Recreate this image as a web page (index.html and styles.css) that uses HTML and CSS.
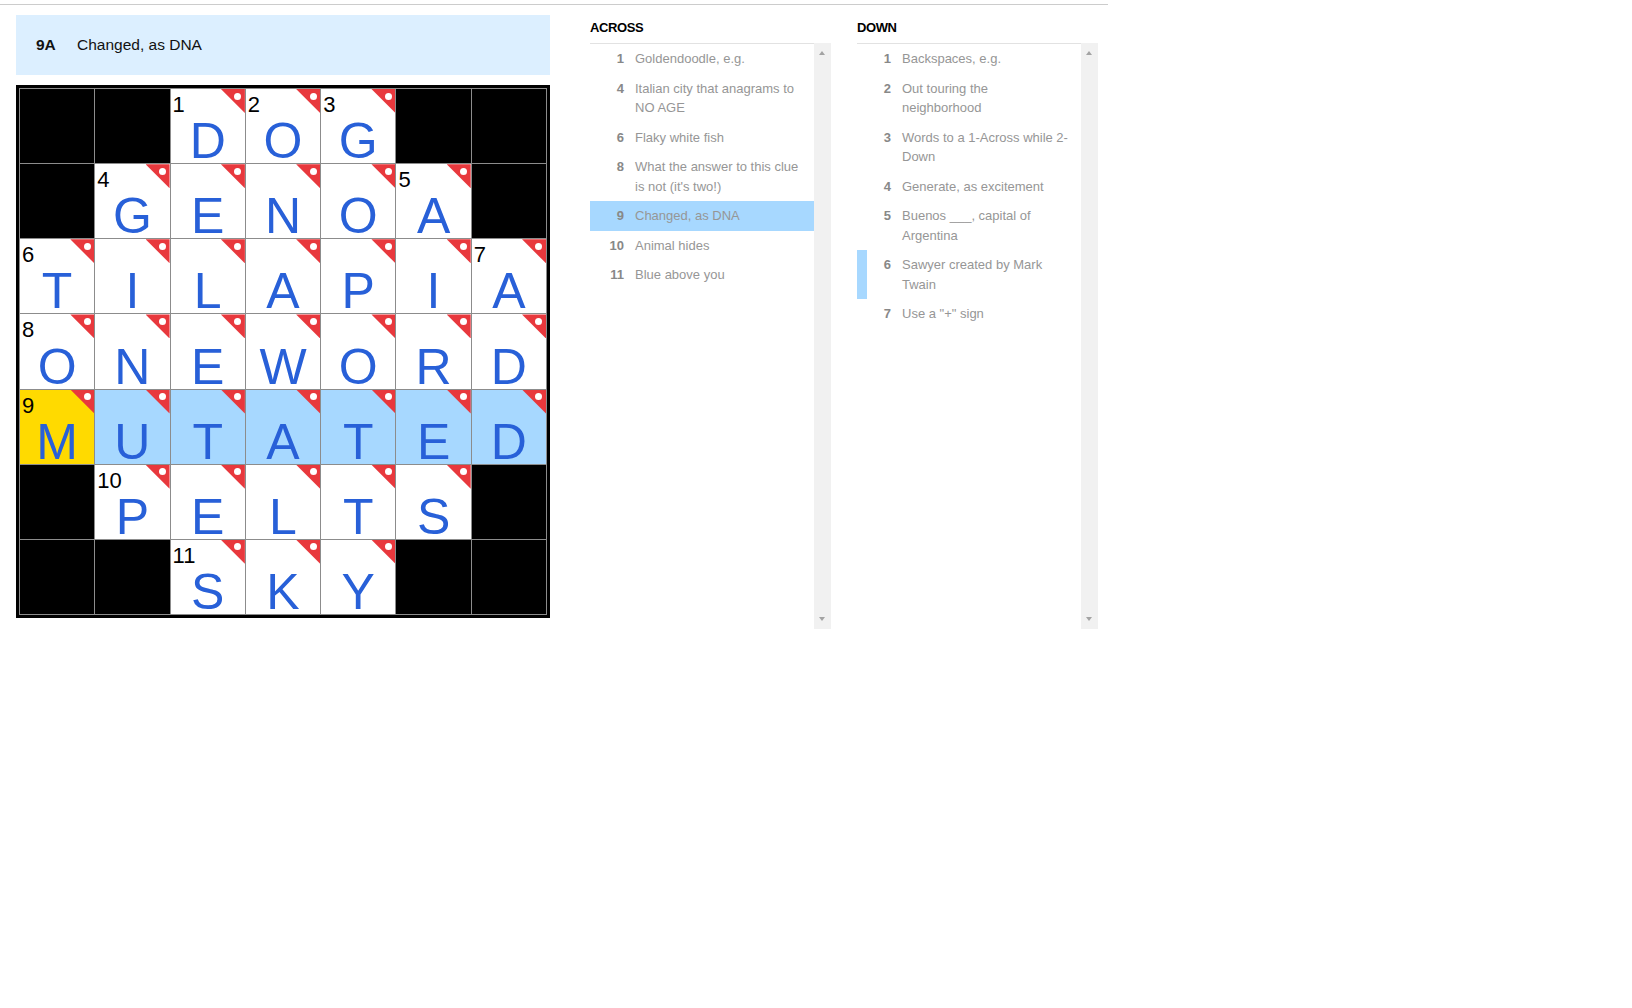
FILE: index.html
```html
<!DOCTYPE html>
<html lang="en">
<head>
<meta charset="utf-8">
<title>Mini Crossword</title>
<link rel="stylesheet" href="styles.css">
</head>
<body>
<div class="app">
  <section class="puzzle">
    <div class="clue-bar"><span class="clue-bar-label">9A</span><span class="clue-bar-text">Changed, as DNA</span></div>
    <div class="board">
      <div class="cell block"></div>
      <div class="cell block"></div>
      <div class="cell open"><span class="num">1</span><span class="letter">D</span></div>
      <div class="cell open"><span class="num">2</span><span class="letter">O</span></div>
      <div class="cell open"><span class="num">3</span><span class="letter">G</span></div>
      <div class="cell block"></div>
      <div class="cell block"></div>

      <div class="cell block"></div>
      <div class="cell open"><span class="num">4</span><span class="letter">G</span></div>
      <div class="cell open"><span class="letter">E</span></div>
      <div class="cell open"><span class="letter">N</span></div>
      <div class="cell open"><span class="letter">O</span></div>
      <div class="cell open"><span class="num">5</span><span class="letter">A</span></div>
      <div class="cell block"></div>

      <div class="cell open"><span class="num">6</span><span class="letter">T</span></div>
      <div class="cell open"><span class="letter">I</span></div>
      <div class="cell open"><span class="letter">L</span></div>
      <div class="cell open"><span class="letter">A</span></div>
      <div class="cell open"><span class="letter">P</span></div>
      <div class="cell open"><span class="letter">I</span></div>
      <div class="cell open"><span class="num">7</span><span class="letter">A</span></div>

      <div class="cell open"><span class="num">8</span><span class="letter">O</span></div>
      <div class="cell open"><span class="letter">N</span></div>
      <div class="cell open"><span class="letter">E</span></div>
      <div class="cell open"><span class="letter">W</span></div>
      <div class="cell open"><span class="letter">O</span></div>
      <div class="cell open"><span class="letter">R</span></div>
      <div class="cell open"><span class="letter">D</span></div>

      <div class="cell open selected"><span class="num">9</span><span class="letter">M</span></div>
      <div class="cell open highlighted"><span class="letter">U</span></div>
      <div class="cell open highlighted"><span class="letter">T</span></div>
      <div class="cell open highlighted"><span class="letter">A</span></div>
      <div class="cell open highlighted"><span class="letter">T</span></div>
      <div class="cell open highlighted"><span class="letter">E</span></div>
      <div class="cell open highlighted"><span class="letter">D</span></div>

      <div class="cell block"></div>
      <div class="cell open"><span class="num">10</span><span class="letter">P</span></div>
      <div class="cell open"><span class="letter">E</span></div>
      <div class="cell open"><span class="letter">L</span></div>
      <div class="cell open"><span class="letter">T</span></div>
      <div class="cell open"><span class="letter">S</span></div>
      <div class="cell block"></div>

      <div class="cell block"></div>
      <div class="cell block"></div>
      <div class="cell open"><span class="num">11</span><span class="letter">S</span></div>
      <div class="cell open"><span class="letter">K</span></div>
      <div class="cell open"><span class="letter">Y</span></div>
      <div class="cell block"></div>
      <div class="cell block"></div>
    </div>
  </section>

  <section class="clue-list across">
    <h3 class="clue-list-title">ACROSS</h3>
    <div class="clue-list-body">
      <ol class="clues">
        <li class="clue"><span class="clue-num">1</span><span class="clue-text">Goldendoodle, e.g.</span></li>
        <li class="clue"><span class="clue-num">4</span><span class="clue-text">Italian city that anagrams to NO AGE</span></li>
        <li class="clue"><span class="clue-num">6</span><span class="clue-text">Flaky white fish</span></li>
        <li class="clue"><span class="clue-num">8</span><span class="clue-text">What the answer to this clue is not (it's two!)</span></li>
        <li class="clue active"><span class="clue-num">9</span><span class="clue-text">Changed, as DNA</span></li>
        <li class="clue"><span class="clue-num">10</span><span class="clue-text">Animal hides</span></li>
        <li class="clue"><span class="clue-num">11</span><span class="clue-text">Blue above you</span></li>
      </ol>
      <div class="scrollbar"><span class="arrow up"></span><span class="arrow down"></span></div>
    </div>
  </section>

  <section class="clue-list down">
    <h3 class="clue-list-title">DOWN</h3>
    <div class="clue-list-body">
      <ol class="clues">
        <li class="clue"><span class="clue-num">1</span><span class="clue-text">Backspaces, e.g.</span></li>
        <li class="clue"><span class="clue-num">2</span><span class="clue-text">Out touring the neighborhood</span></li>
        <li class="clue"><span class="clue-num">3</span><span class="clue-text">Words to a 1-Across while 2-Down</span></li>
        <li class="clue"><span class="clue-num">4</span><span class="clue-text">Generate, as excitement</span></li>
        <li class="clue"><span class="clue-num">5</span><span class="clue-text">Buenos ___, capital of Argentina</span></li>
        <li class="clue crossing"><span class="clue-num">6</span><span class="clue-text">Sawyer created by Mark Twain</span></li>
        <li class="clue"><span class="clue-num">7</span><span class="clue-text">Use a "+" sign</span></li>
      </ol>
      <div class="scrollbar"><span class="arrow up"></span><span class="arrow down"></span></div>
    </div>
  </section>
</div>
</body>
</html>
```

FILE: styles.css
```css
* {
  box-sizing: border-box;
}

body {
  margin: 0;
  background: #fff;
  font-family: "Liberation Sans", Arial, sans-serif;
}

.app {
  width: 1108px;
  margin-top: 4px;
  border-top: 1px solid #cccccc;
  padding: 10px 0 0 16px;
  display: flex;
  align-items: flex-start;
}

/* ---------- puzzle ---------- */

.puzzle {
  width: 534px;
  flex: none;
  display: flex;
  flex-direction: column;
  gap: 10px;
}

.clue-bar {
  height: 60px;
  background: #dcefff;
  display: flex;
  align-items: center;
  padding-left: 20px;
  font-size: 15.5px;
  color: #121212;
}

.clue-bar-label {
  width: 41px;
  font-weight: bold;
}

.board {
  width: 534px;
  height: 533px;
  border: 3px solid #000;
  background: #8c8c8c;
  padding: 1px;
  display: grid;
  grid-template-columns: repeat(7, 1fr);
  grid-template-rows: repeat(7, 1fr);
  gap: 1px;
}

.cell {
  position: relative;
  background: #fff;
  display: flex;
  justify-content: center;
  align-items: flex-end;
}

.cell.block {
  background: #000;
}

.cell.highlighted {
  background: #a7d8ff;
}

.cell.selected {
  background: #ffda00;
}

.cell.open::before {
  content: "";
  position: absolute;
  top: 0;
  right: 0;
  width: 24px;
  height: 24px;
  background: #e8383d;
  clip-path: polygon(0 0, 100% 0, 100% 100%);
}

.cell.open::after {
  content: "";
  position: absolute;
  top: 3.5px;
  right: 3.5px;
  width: 7px;
  height: 7px;
  border-radius: 50%;
  background: #fff;
}

.num {
  position: absolute;
  top: 5px;
  left: 2px;
  font-size: 22px;
  line-height: 1;
  color: #000;
}

.letter {
  font-size: 50px;
  line-height: 1;
  color: #2860d8;
  margin-bottom: -3px;
}

/* ---------- clue lists ---------- */

.clue-list {
  width: 241px;
  flex: none;
  margin-left: 40px;
}

.clue-list.down {
  margin-left: 26px;
}

.clue-list-title {
  margin: 5px 0 7px;
  font-size: 13px;
  line-height: 16px;
  font-weight: bold;
  letter-spacing: -0.4px;
  color: #000;
}

.clue-list-body {
  display: flex;
  height: 586px;
}

.clues {
  list-style: none;
  margin: 0;
  padding: 0;
  width: 224px;
  flex: none;
  border-top: 1px solid #e2e2e2;
}

.clue {
  display: flex;
  align-items: flex-start;
  padding: 5px 10px 5px 0;
  border-left: 10px solid transparent;
  font-size: 13px;
  line-height: 19.5px;
  color: #969696;
}

.clue.active {
  background: #a7d8ff;
}

.clue.crossing {
  border-left-color: #a7d8ff;
}

.clue-num {
  width: 24px;
  flex: none;
  margin-right: 11px;
  text-align: right;
  font-weight: bold;
  color: #888888;
}

.clue-text {
  flex: 1;
}

.scrollbar {
  position: relative;
  width: 17px;
  flex: none;
  background: #f1f1f1;
}

.arrow {
  position: absolute;
  left: 5px;
  width: 0;
  height: 0;
  border-left: 3.5px solid transparent;
  border-right: 3.5px solid transparent;
}

.arrow.up {
  top: 8px;
  border-bottom: 4px solid #a3a3a3;
}

.arrow.down {
  bottom: 8px;
  border-top: 4px solid #a3a3a3;
}
```
